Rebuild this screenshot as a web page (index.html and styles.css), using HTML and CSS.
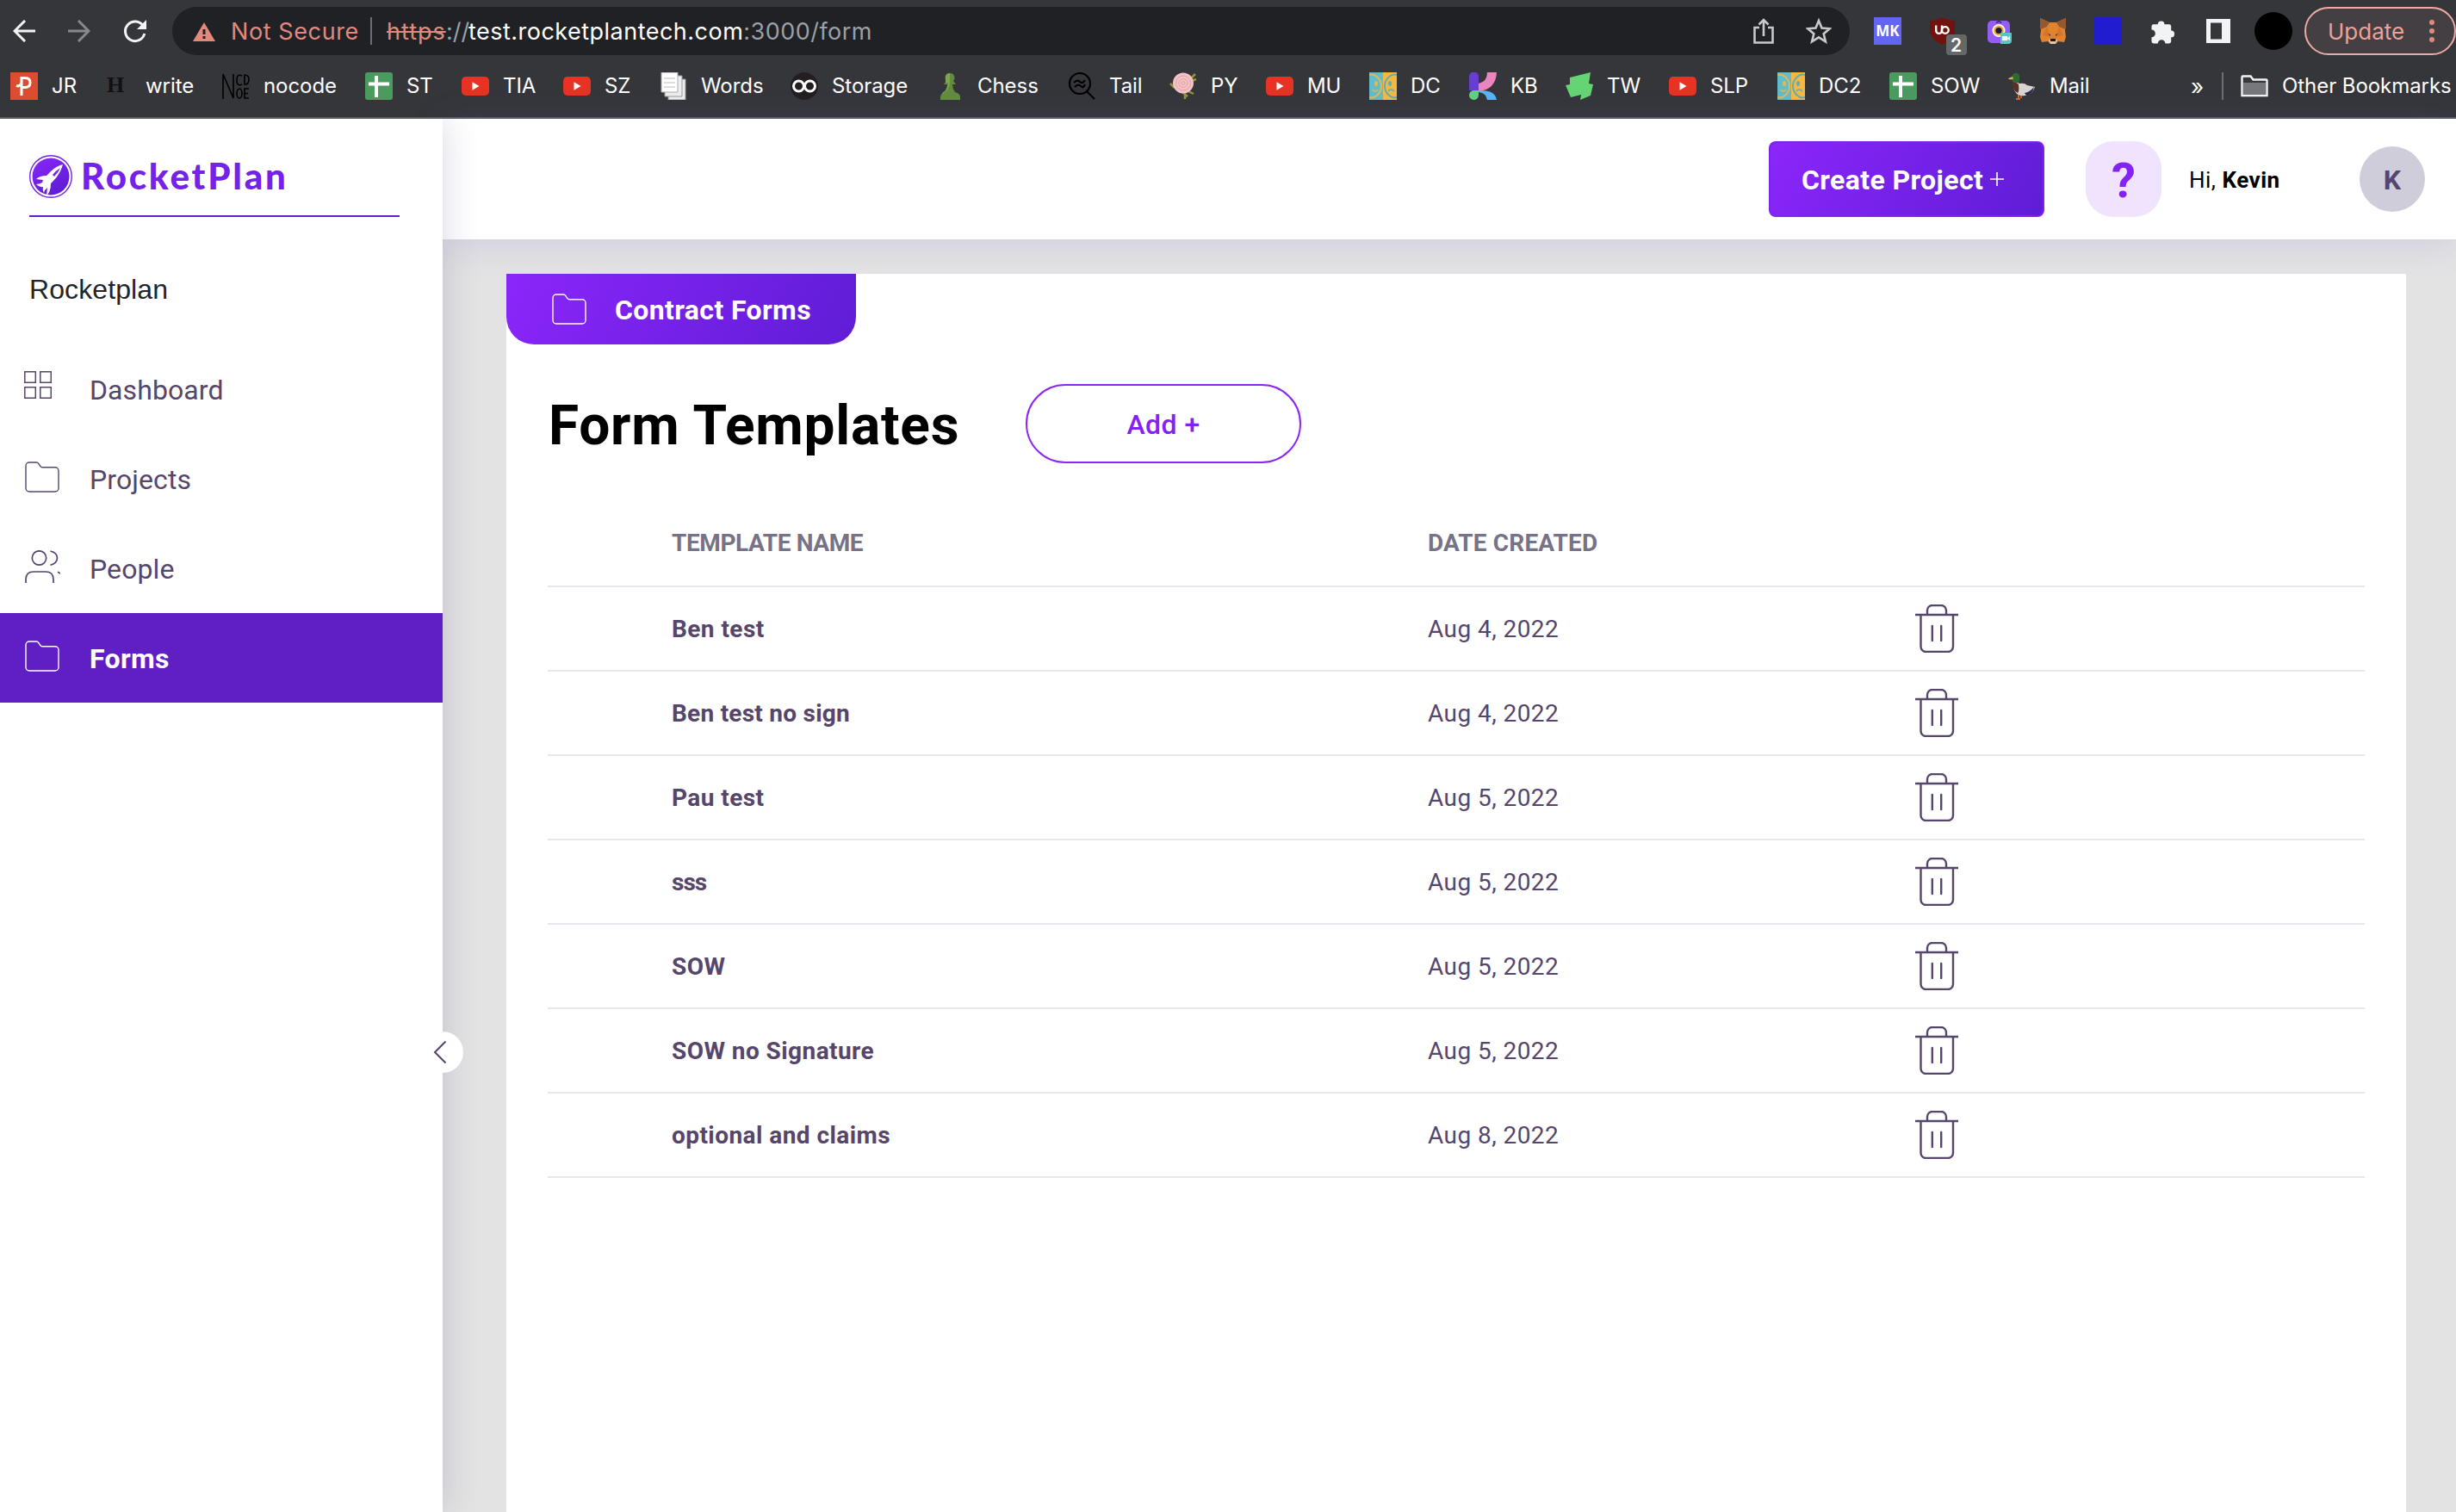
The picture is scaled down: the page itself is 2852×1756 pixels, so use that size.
FILE: index.html
```html
<!DOCTYPE html>
<html lang="en">
<head>
<meta charset="utf-8">
<title>RocketPlan</title>
<link rel="stylesheet" href="styles.css">
</head>
<body>
<svg class="defs" width="0" height="0">
  <defs>
    <linearGradient id="brand" x1="0" y1="0" x2="0.6" y2="1"><stop offset="0" stop-color="#8b26fa"/><stop offset="1" stop-color="#5f1dd6"/></linearGradient>
  </defs>
  <symbol id="youtube" viewBox="0 0 32 32"><rect x="0" y="5" width="32" height="22" rx="5" fill="#e73323"/><path d="M12.5 11.3 20.5 16 12.5 20.7z" fill="#fff"/></symbol>
  <symbol id="sheet" viewBox="0 0 32 32"><rect width="32" height="32" rx="3" fill="#4b9b5f"/><path d="M4 11.5h24v4H4zM11 4h4v25h-4z" fill="#fff"/></symbol>
  <symbol id="faces" viewBox="0 0 32 32"><rect width="16" height="32" fill="#63bcc9"/><rect x="16" width="16" height="32" fill="#f5b942"/><path d="M0 3c7-2 14 5 14 13S7 31 0 29" fill="none" stroke="#e5b850" stroke-width="2"/><path d="M32 3c-7-2-14 5-14 13s7 15 14 13" fill="none" stroke="#63aeb0" stroke-width="2"/><path d="M4 20q3 4 6 0" fill="none" stroke="#e5b850" stroke-width="1.5"/><path d="M22 22q3-4 7 0" fill="none" stroke="#63aeb0" stroke-width="1.5"/><ellipse cx="8" cy="13" rx="2" ry="3" fill="#e5b850"/><ellipse cx="24" cy="13" rx="2" ry="3" fill="#63aeb0"/></symbol>
  <symbol id="folder" viewBox="0 0 40 36"><path d="M1 5a4 4 0 0 1 4-4h8.500c1 0 1.600.4 2.200 1.300L18 5.700c.5.800 1 1 2 1h15a4 4 0 0 1 4 4V31a4 4 0 0 1-4 4H5a4 4 0 0 1-4-4z" fill="none" stroke="currentColor" stroke-width="1.400"/></symbol>
  <symbol id="trash" viewBox="0 0 50 56"><g fill="none" stroke="#56466b" stroke-width="2.400"><path d="M14 12V7a6 6 0 0 1 6-6h10a6 6 0 0 1 6 6v5M0 12h50M6.500 12v37a6 6 0 0 0 6 6h25.500a6 6 0 0 0 6-6V12"/><path d="M19.800 25v17M30.200 25v17" stroke-linecap="round"/></g></symbol>
</svg>

<div class="browser">
  <div class="toolbar">
    <svg class="nav-icon" viewBox="0 0 26 26"><path d="M14 1 2 13l12 12M2 13h24" fill="none" stroke="#f1f3f4" stroke-width="3"/></svg>
    <svg class="nav-icon dim" viewBox="0 0 26 26"><path d="M12 1l12 12-12 12M24 13H0" fill="none" stroke="#87888b" stroke-width="3"/></svg>
    <svg class="nav-icon reload" viewBox="0 0 28 28"><path d="M23.500 8.500A11.300 11.300 0 1 0 24.800 17" fill="none" stroke="#f1f3f4" stroke-width="3"/><path d="M27 1v11H16z" fill="#f1f3f4"/></svg>
    <div class="omnibox">
      <svg class="warn" viewBox="0 0 26 22"><path d="M13 0 26 22H0z" fill="#e2897e"/><path d="M11.500 8h3v6h-3zM11.500 16h3v3h-3z" fill="#202124"/></svg>
      <span class="insecure">Not Secure</span>
      <i class="rule"></i>
      <span class="url"><span class="scheme">https</span><span class="path slashes">://</span><span class="host">test.rocketplantech.com</span><span class="path">:3000/form</span></span>
      <svg class="share" viewBox="0 0 24 30"><g fill="none" stroke="#c8c9cb" stroke-width="2.600"><path d="M7 11H1.500v17.500h21V11H17"/><path d="M12 21V2M6.500 7.500 12 2l5.500 5.500"/></g></svg>
      <svg class="star" viewBox="0 0 30 30"><path d="M15 3l3.500 8.600 9.200.7-7 6 2.200 9L15 22.400 7.100 27.300l2.200-9-7-6 9.200-.7z" fill="none" stroke="#c8c9cb" stroke-width="2.600"/></svg>
    </div>
    <div class="extensions">
      <span class="mk">MK</span>
      <svg class="shield" viewBox="0 0 44 44"><path d="M15.500 0q6 4 14.500 4v10c0 9-6 14-14.500 18C7 28 1 23 1 14V4q8.500 0 14.500-4z" fill="#72120f"/><g fill="none" stroke="#fff" stroke-width="2.400"><path d="M8.200 9.500v6a3.400 3.400 0 0 0 6.800 0v-6"/><circle cx="18.800" cy="15" r="3.900"/></g><rect x="20" y="20" width="24" height="24" rx="4" fill="#666769"/><text x="31.500" y="40" text-anchor="middle" class="badge-text">2</text></svg>
      <svg class="cam" viewBox="0 0 30 30"><rect x="2" y="3" width="26" height="26" rx="5" fill="#965df5"/><circle cx="15" cy="14.500" r="7.500" fill="#fff"/><circle cx="15" cy="14.500" r="5.800" fill="#f0a531"/><circle cx="15" cy="14.500" r="3.600" fill="#1c1836"/><path d="M12 5.500q3-3 6 0" fill="none" stroke="#33205f" stroke-width="1.500"/><path d="M17 20a3 3 0 0 1 3-3h10v9a4 4 0 0 1-4 4h-9z" fill="#56c7c4"/><path d="M19 21h6v5h-6zM25 23l3-2v5l-3-2z" fill="#fff"/></svg>
      <svg class="fox" viewBox="0 0 32 30"><path d="M1 0l11 5h8l11-5v9l-1 5 1 8-2 6-7-1-3 3h-6l-3-3-7 1-2-6 1-8-1-5z" fill="#e2822d"/><path d="M1 0l11 5-3 5-7 3-1-4zM31 0 20 5l3 5 7 3 1-4z" fill="#94592f"/><path d="M9 10l4 12-9-2zM23 10l-4 12 9-2z" fill="#d5752c"/><path d="M10 18l3 1v2zM22 18l-3 1v2z" fill="#30343b"/><path d="M11 25h10l-2 5h-6z" fill="#d8c8b9"/><path d="M13 24h6v3h-6z" fill="#1b1b1e"/></svg>
      <i class="blue"></i>
      <svg class="puzzle" viewBox="0 0 30 30"><path d="M8 6.500a4 4 0 0 1 8 0h5.500a2.500 2.500 0 0 1 2.500 2.500v5a4 4 0 0 1 0 8v5a2.500 2.500 0 0 1-2.500 2.500H17a4.500 4.500 0 0 0-9 0H3A2.500 2.500 0 0 1 .5 27v-5a4.500 4.500 0 0 0 0-9V9A2.500 2.500 0 0 1 3 6.500z" fill="#f1f3f4"/></svg>
      <svg class="panel-icon" viewBox="0 0 28 28"><path fill-rule="evenodd" d="M0 0h28v28H0zM5 4.500v19h13v-19z" fill="#f1f3f4"/></svg>
      <i class="profile"></i>
      <div class="update"><span>Update</span><svg viewBox="0 0 6 28"><g fill="#e2897e"><circle cx="3" cy="4" r="3"/><circle cx="3" cy="14" r="3"/><circle cx="3" cy="24" r="3"/></g></svg></div>
    </div>
  </div>
  <div class="bookmarks">
    <a><svg viewBox="0 0 32 32"><rect width="32" height="32" fill="#db4c31"/><path d="M13 27V6.500h4q6 0 6 5.500t-6 5.500h-4M13 12q-2 5-6 3.500" fill="none" stroke="#fff" stroke-width="3"/></svg><span>JR</span></a>
    <a><span class="h-icon">H</span><span>write</span></a>
    <a><svg viewBox="0 0 32 32"><g fill="none" stroke="#000" stroke-width="1.600"><path d="M1 31V2l12 28V2M23 4q-6-3-6 5t6 5M26 3v11q5 0 5-5.500T26 3z"/><ellipse cx="20" cy="24.500" rx="3" ry="5.500"/><path d="M31 19h-5v11h5M26 24.500h4"/></g></svg><span>nocode</span></a>
    <a><svg><use href="#sheet"/></svg><span>ST</span></a>
    <a><svg><use href="#youtube"/></svg><span>TIA</span></a>
    <a><svg><use href="#youtube"/></svg><span>SZ</span></a>
    <a><svg viewBox="0 0 32 32"><path d="M10 8h20v24H10z" fill="#eee" stroke="#999"/><path d="M6 4h20v24H6z" fill="#eee" stroke="#999"/><path d="M2 0h19v23H2z" fill="#fff" stroke="#aaa"/><path d="M5 7h13M5 12h13M5 17h13" stroke="#ddd" stroke-width="2"/></svg><span>Words</span></a>
    <a><svg viewBox="0 0 32 32"><circle cx="16" cy="16" r="16" fill="#231f20"/><g fill="none" stroke="#fff" stroke-width="3"><circle cx="9.500" cy="16" r="6"/><circle cx="22.500" cy="16" r="6"/></g></svg><span>Storage</span></a>
    <a><svg viewBox="0 0 32 32"><path d="M5 32v-4q1-4 5-5 3-4 3-9h-4l3-4a5.500 5.500 0 1 1 8 0l3 4h-4q0 5 3 9 5 1 6 5v4z" fill="#648b3d"/><path d="M11 5q1-4 5-4v10q0 8-8 14-2-1 2-3 4-5 4-10h-3z" fill="#7ea752"/></svg><span>Chess</span></a>
    <a><svg viewBox="0 0 32 32"><g fill="none" stroke="#000" stroke-width="2.200"><circle cx="14" cy="13" r="12"/><path d="M22 22l9 9M7 12q4-4 7-1t6-2M8 17q4-4 7-1t5-2"/></g></svg><span>Tail</span></a>
    <a><svg viewBox="0 0 32 32"><path d="M1 13l5 5M30 2l-8 8M31 8l-8 3M28 25l-8-4M18 22v9M15 23l6 5" stroke="#92963a" stroke-width="2.500"/><ellipse cx="16" cy="12.500" rx="12" ry="12" fill="#f3c3c5"/><g fill="none" stroke="#e4a1a5"><circle cx="16" cy="12.500" r="8.500"/><circle cx="16" cy="12.500" r="5"/><circle cx="16" cy="12.500" r="2"/></g></svg><span>PY</span></a>
    <a><svg><use href="#youtube"/></svg><span>MU</span></a>
    <a><svg><use href="#faces"/></svg><span>DC</span></a>
    <a><svg viewBox="0 0 32 32"><path d="M0 5a5.500 5.500 0 0 1 11 0v16H0z" fill="#673dd2"/><path d="M21 0h11q-1 20-21 22v-9q10-2 10-13z" fill="#e987bd"/><path d="M11 21q19-1 21 11H21q-1-8-10-9z" fill="#5ab4f8"/><path d="M6 21h5v5.500a5.500 5.500 0 1 1-5-5.500z" fill="#65cd87"/></svg><span>KB</span></a>
    <a><svg viewBox="0 0 32 32"><path d="M5 6 29 0l-2 13 5 1-3 13-12 5 1-6-12 3L0 15l5-1z" fill="#65d474"/></svg><span>TW</span></a>
    <a><svg><use href="#youtube"/></svg><span>SLP</span></a>
    <a><svg><use href="#faces"/></svg><span>DC2</span></a>
    <a><svg><use href="#sheet"/></svg><span>SOW</span></a>
    <a><svg viewBox="0 0 32 32"><path d="M12 26v5M15 26v4M9 31h5" stroke="#d4652a" stroke-width="2"/><path d="M6 12q3-2 7 1 6-1 9 2l9 2q-2 7-8 9-7 3-13-1-5-5-4-13z" fill="#d9d5d3"/><path d="M5 12q5-1 7 2 1 8-1 10-6-3-6-12z" fill="#5a3023"/><path d="M19 24q6-1 11-7-1 8-9 10z" fill="#2c2a4a"/><path d="M5 11 4 5q2-5 6-4t3 6v4q-4 2-8 0z" fill="#2c6b32"/><path d="M5 5 0 7q0 2 6 1z" fill="#ddb138"/></svg><span>Mail</span></a>
    <span class="more">»</span>
    <a class="other"><svg viewBox="0 0 32 32"><path d="M1.500 27V5.500q0-1 1-1h9l3 4h15q1 0 1 1V27z" fill="#37383c" stroke="#f1f3f4" stroke-width="2.400"/><path d="M3 12h26v14H3z" fill="#77787b"/></svg><span>Other Bookmarks</span></a>
  </div>
</div>

<div class="app">
  <aside class="sidebar">
    <div class="brand">
      <svg viewBox="0 0 50 50"><circle cx="25" cy="25" r="24.300" fill="#fff" stroke="#7421ea" stroke-width="1.400"/><circle cx="25" cy="25" r="21.500" fill="url(#brand)"/><path d="M39 11q-8 2-14 8l-5 5q-8 0-12 4l8 1-1 3q-4 2-7 2 4 4 8 3-1 4 1 7 1-4 4-6l-1 9q5-4 5-14l3-3q8-8 11-19z" fill="#fff"/><path d="M36 15q-5 3-9 8l2 2q5-5 7-10z" fill="#7a22ee"/></svg>
      <span>RocketPlan</span>
    </div>
    <div class="company">Rocketplan</div>
    <nav>
      <a><svg class="dash" viewBox="0 0 32 32"><g fill="none" stroke="#56466b" stroke-width="1.500"><path d="M.8.8h12.500v12.500H.8zM18.800.8h12.500v12.500H18.800zM.8 18.800h12.500v12.500H.8zM18.800 18.800h12.500v12.500H18.800z"/></g></svg><span>Dashboard</span></a>
      <a><svg><use href="#folder"/></svg><span>Projects</span></a>
      <a><svg class="people" viewBox="0 0 41 38"><g fill="none" stroke="#56466b" stroke-width="1.700"><circle cx="16.500" cy="9" r="8.200"/><path d="M29.500 1q8 2 8 8t-8 8.300M1 38v-4q0-9 9-9h14q9 0 9 9v4M38 25.300l3 1.600"/></g></svg><span>People</span></a>
      <a class="active"><svg><use href="#folder"/></svg><span>Forms</span></a>
    </nav>
    <button class="collapse"><svg viewBox="0 0 16 28"><path d="M14.500 1.500 2 14l12.500 12.500" fill="none" stroke="#56466b" stroke-width="2"/></svg></button>
  </aside>

  <div class="content">
    <header>
      <button class="create"><span>Create Project</span><svg viewBox="0 0 16 16"><path d="M8 0v16M0 8h16" stroke="#fff" stroke-width="1.600"/></svg></button>
      <button class="help">?</button>
      <div class="greeting"><span>Hi, <b>Kevin</b></span></div>
      <div class="avatar">K</div>
    </header>
    <main>
      <section class="panel">
        <div class="tab"><svg><use href="#folder"/></svg><span>Contract Forms</span></div>
        <div class="title">
          <h1>Form Templates</h1>
          <button class="add">Add +</button>
        </div>
        <div class="table">
          <div class="row head"><span class="tight">TEMPLATE NAME</span><span>DATE CREATED</span></div>
          <div class="row"><b>Ben test</b><span>Aug 4, 2022</span><svg><use href="#trash"/></svg></div>
          <div class="row"><b class="snug">Ben test no sign</b><span>Aug 4, 2022</span><svg><use href="#trash"/></svg></div>
          <div class="row"><b>Pau test</b><span>Aug 5, 2022</span><svg><use href="#trash"/></svg></div>
          <div class="row"><b class="tight">sss</b><span>Aug 5, 2022</span><svg><use href="#trash"/></svg></div>
          <div class="row"><b>SOW</b><span>Aug 5, 2022</span><svg><use href="#trash"/></svg></div>
          <div class="row"><b>SOW no Signature</b><span>Aug 5, 2022</span><svg><use href="#trash"/></svg></div>
          <div class="row"><b>optional and claims</b><span>Aug 8, 2022</span><svg><use href="#trash"/></svg></div>
        </div>
      </section>
    </main>
  </div>
</div>
</body>
</html>
```
FILE: styles.css
```css
* { box-sizing: border-box; }
body { margin: 0; width: 2852px; height: 1756px; overflow: hidden; background: #e3e3e3; font-family: Roboto, "Liberation Sans", sans-serif; color: #56466b; }
.defs { position: absolute; }
svg { display: block; flex: none; }
button { border: 0; padding: 0; font: inherit; }
a, span, h1 { white-space: nowrap; }

/* Browser chrome */
.browser { height: 138px; background: #35363a; border-bottom: 2px solid #5e5e62; font-family: Inter, "Liberation Sans", sans-serif; color: #fff; }
.toolbar { height: 72px; display: flex; align-items: center; padding-left: 15px; }
.nav-icon { width: 26px; height: 26px; }
.dim { margin-left: 38px; }
.reload { width: 28px; height: 28px; margin-left: 38px; }
.omnibox { width: 1948px; height: 56px; margin-left: 29px; padding: 0 21px 0 24px; border-radius: 28px; background: #202124; display: flex; align-items: center; font-size: 27px; letter-spacing: .48px; }
.warn { width: 26px; height: 22px; margin-top: 2px; }
.insecure { margin-left: 18px; width: 162px; color: #e2897e; letter-spacing: .6px; }
.rule { width: 2px; height: 32px; background: #6d6e71; }
.url { margin-left: 17px; flex: 1; display: flex; }
.scheme { width: 69px; letter-spacing: 1px; color: #e2897e; text-decoration: line-through; }
.slashes { width: 26px; letter-spacing: 0; }
.path { color: #9aa0a6; }
.host { color: #fff; }
.share { width: 24px; height: 30px; margin-right: 37px; }
.star { width: 30px; height: 30px; }
.extensions { display: flex; align-items: center; margin-left: 28px; }
.mk { width: 32px; height: 32px; background: #6366f5; font: 700 17px/32px "Open Sans", sans-serif; text-align: center; }
.shield { width: 44px; height: 44px; margin: 12px 0 0 32px; }
.badge-text { font: 600 21px Inter, sans-serif; fill: #fff; }
.cam { width: 30px; height: 30px; margin-left: 22px; }
.fox { width: 32px; height: 30px; margin-left: 32px; }
.blue { width: 32px; height: 32px; margin-left: 32px; background: #221cd0; }
.puzzle { width: 29px; height: 29px; margin-left: 34px; }
.panel-icon { width: 28px; height: 28px; margin-left: 35px; }
.profile { width: 44px; height: 44px; margin-left: 28px; border-radius: 50%; background: #000; }
.update { width: 176px; height: 56px; margin-left: 14px; padding: 0 23px 0 25px; border: 2px solid #eeaaa4; border-radius: 28px; background: #443f43; color: #e8a39c; font-size: 26px; display: flex; align-items: center; justify-content: space-between; }
.update svg { width: 6px; height: 28px; }
.bookmarks { height: 56px; padding-left: 12px; display: grid; align-items: center; grid-template-columns: 109px 137px 166px 112px 118px 112px 152px 169px 153px 118px 112px 120px 116px 112px 120px 126px 130px 138px 212px 36px auto; font-size: 24px; letter-spacing: -.06px; }
.bookmarks a { display: flex; align-items: center; gap: 16px; }
.bookmarks a > span { position: relative; top: -1px; }
.bookmarks svg { width: 32px; height: 32px; }
.h-icon { width: 32px; padding-left: 3px; color: #111; font: 700 26px "Liberation Serif", serif; }
.more { font-size: 26px; }
.other { height: 32px; padding-left: 20px; border-left: 2px solid #6d6e71; }

/* App */
.app { height: 1618px; display: flex; }
.sidebar { position: relative; z-index: 2; width: 514px; background: #fff; box-shadow: 0 0 40px rgba(60, 50, 110, .2); clip-path: inset(0 -60px 0 0); }
.brand { margin: 0 50px 0 34px; height: 114px; padding-top: 42px; border-bottom: 2px solid #5f1fc4; display: flex; gap: 10px; color: #7421ea; font: 900 42px/48px Lato, sans-serif; letter-spacing: 2.8px; }
.brand svg { width: 50px; height: 50px; }
.company { height: 148px; padding: 64px 0 0 34px; font: 32px/40px "Liberation Sans", Arial, sans-serif; letter-spacing: .1px; color: #212529; }
nav a { height: 104px; padding-left: 29px; display: flex; align-items: center; font-size: 32px; letter-spacing: .1px; }
nav span { padding-top: 1px; }
nav svg { width: 40px; height: 36px; margin: -4px 35px 0 0; }
nav .dash { width: 32px; height: 32px; margin: -10px 44px 0 -1px; }
nav .people { width: 41px; height: 38px; margin: -4px 34px 0 0; }
nav .active { background: #5f1fc4; color: #fff; font-weight: 700; letter-spacing: .3px; }
.collapse { position: absolute; left: 490px; top: 1060px; width: 48px; height: 48px; border-radius: 50%; background: #fff; }
.collapse svg { width: 16px; height: 28px; margin-left: 13px; }
.content { flex: 1; display: flex; flex-direction: column; }
header { position: relative; z-index: 1; flex: none; height: 140px; padding-right: 36px; background: #fff; box-shadow: 0 4px 40px rgba(100, 80, 200, .16); display: flex; align-items: center; justify-content: flex-end; }
.create { width: 320px; height: 88px; margin-right: 48px; padding-left: 36px; border: 2px solid #7e22ee; border-radius: 8px; background: linear-gradient(120deg, #8b26fa, #5f1dd6); color: #fff; font-size: 32px; font-weight: 700; letter-spacing: .38px; display: flex; align-items: center; gap: 8px; }
.create span { padding-top: 1px; }
.create svg { width: 16px; height: 16px; }
.help { width: 88px; height: 88px; border-radius: 32px; background: #f0e3fd; color: #8422f3; font-size: 56px; font-weight: 700; padding-top: 4px; }
.greeting { width: 230px; padding: 2px 0 0 32px; color: #000; font-size: 26px; letter-spacing: .5px; }
.avatar { width: 76px; height: 76px; border-radius: 50%; background: #d0cdda; text-align: center; font: 700 32px/78px Roboto, sans-serif; }
main { flex: 1; padding: 40px 58px 0 74px; }
.panel { height: 100%; background: #fff; overflow: hidden; }
.tab { width: 406px; height: 82px; padding-left: 53px; border-radius: 0 0 32px 32px; background: linear-gradient(120deg, #8b26fa, #5f1dd6); color: #fff; font-size: 32px; font-weight: 700; letter-spacing: .38px; display: flex; align-items: center; gap: 33px; }
.tab span { padding-top: 1px; }
.tab svg { width: 40px; height: 36px; }
.title { height: 92px; margin-top: 46px; padding-left: 49px; display: flex; align-items: center; }
h1 { margin: 0; width: 554px; padding-top: 4px; color: #000; font-size: 64px; font-weight: 700; letter-spacing: .75px; }
.add { width: 320px; height: 92px; padding-top: 1px; border: 2px solid #8b26fa; border-radius: 46px; background: #fff; color: #8422f3; font-size: 32px; font-weight: 500; letter-spacing: .44px; }
.table { margin: 42px 48px 0; }
.row { height: 98px; padding-left: 144px; border-bottom: 2px solid #e6e6ec; display: grid; grid-template-columns: 878px 566px auto; align-items: center; font-size: 28px; letter-spacing: .44px; }
.row svg { width: 50px; height: 56px; }
.head { height: 102px; color: #777387; font-weight: 700; letter-spacing: .15px; }
.head .tight { letter-spacing: -.4px; }
b.tight { letter-spacing: -1px; }
b.snug { letter-spacing: .25px; }
```
